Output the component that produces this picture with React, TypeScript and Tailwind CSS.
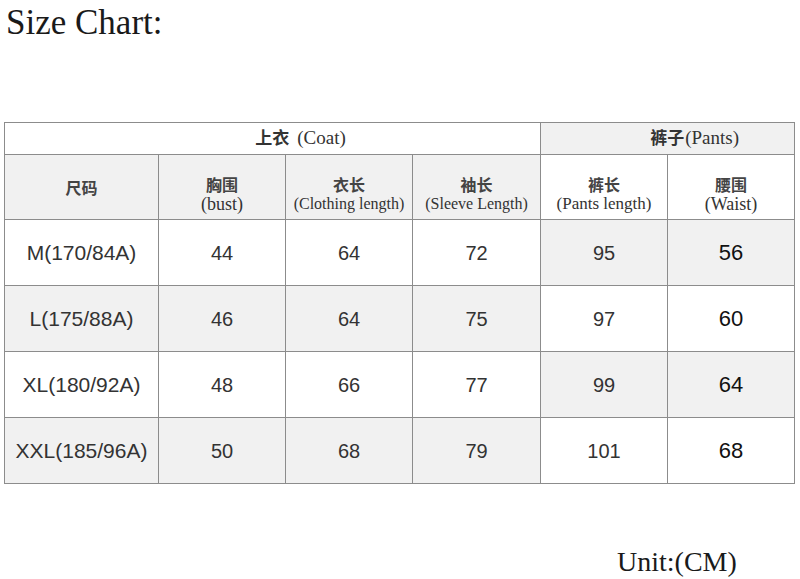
const sans = "font-['Liberation_Sans','Noto_Sans_CJK_SC',sans-serif]";
const serif = "font-['Liberation_Serif','Noto_Sans_CJK_SC',serif]";
const cjk = "font-['Noto_Sans_CJK_SC',sans-serif]";

const rows = [
  { size: "M(170/84A)", vals: [44, 64, 72, 95, 56] },
  { size: "L(175/88A)", vals: [46, 64, 75, 97, 60] },
  { size: "XL(180/92A)", vals: [48, 66, 77, 99, 64] },
  { size: "XXL(185/96A)", vals: [50, 68, 79, 101, 68] },
];

const heads = [
  { zh: "胸围", en: "(bust)", size: "text-[18px]" },
  { zh: "衣长", en: "(Clothing length)", size: "text-[16px]" },
  { zh: "袖长", en: "(Sleeve Length)", size: "text-[16px]" },
  { zh: "裤长", en: "(Pants length)", size: "text-[17px]" },
  { zh: "腰围", en: "(Waist)", size: "text-[18px]" },
];

const cell = "border border-[#8c8c8c] text-center align-middle";

export default function App() {
  return (
    <div className="w-[800px] h-[579px] bg-white flex flex-col">
      <div className={`${serif} text-[35px] leading-none text-[#1a1a1a] pl-[6px] pt-[5px]`}>Size Chart:</div>

      <table className="table-fixed border-collapse ml-[4px] mt-[82px] w-[790px]">
        <colgroup>
          <col className="w-[154px]" />
          <col className="w-[127px]" />
          <col className="w-[127px]" />
          <col className="w-[128px]" />
          <col className="w-[127px]" />
          <col className="w-[127px]" />
        </colgroup>
        <tbody>
          <tr className="h-[32px]">
            <td colSpan={4} className={`${cell} bg-white pl-[56px] pr-0 py-0`}>
              <span className={`${cjk} font-bold text-[17px] text-[#333]`}>上衣</span>
              <span className={`${serif} text-[19px] text-[#333] ml-[8px]`}>(Coat)</span>
            </td>
            <td colSpan={2} className={`${cell} bg-[#f1f1f1] pl-[54px] pr-0 py-0`}>
              <span className={`${cjk} font-bold text-[17px] text-[#333]`}>裤子</span>
              <span className={`${serif} text-[19px] text-[#333] ml-[1px]`}>(Pants)</span>
            </td>
          </tr>
          <tr className="h-[65px]">
            <td className={`${cell} p-0 bg-[#f1f1f1]`}>
              <span className={`${cjk} font-bold text-[16px] text-[#444]`}>尺码</span>
            </td>
            {heads.map((h, i) => (
              <td key={h.zh} className={`${cell} p-0 ${i < 3 ? "bg-[#f1f1f1]" : "bg-white"}`}>
                <div className="flex flex-col items-center pt-[13px]">
                  <span className={`${cjk} font-bold text-[16px] leading-[20px] text-[#444]`}>{h.zh}</span>
                  <span className={`${serif} ${h.size} leading-[20px] text-[#333]`}>{h.en}</span>
                </div>
              </td>
            ))}
          </tr>
          {rows.map((r, ri) => {
            const coatGray = ri % 2 === 1;
            const coatBg = coatGray ? "bg-[#f1f1f1]" : "bg-white";
            const pantsBg = coatGray ? "bg-white" : "bg-[#f1f1f1]";
            return (
              <tr key={r.size} className="h-[66px]">
                <td className={`${cell} p-0 ${coatBg} ${sans} text-[21px] text-[#333]`}>{r.size}</td>
                {r.vals.map((v, vi) => (
                  <td
                    key={vi}
                    className={`${cell} p-0 ${vi < 3 ? coatBg : pantsBg} ${sans} ${vi === 4 ? "text-[#111] text-[22px]" : "text-[20px] text-[#333]"}`}
                  >
                    {v}
                  </td>
                ))}
              </tr>
            );
          })}
        </tbody>
      </table>

      <div className={`${serif} text-[28px] leading-none text-[#1a1a1a] pl-[617px] mt-[64px]`}>Unit:(CM)</div>
    </div>
  );
}
